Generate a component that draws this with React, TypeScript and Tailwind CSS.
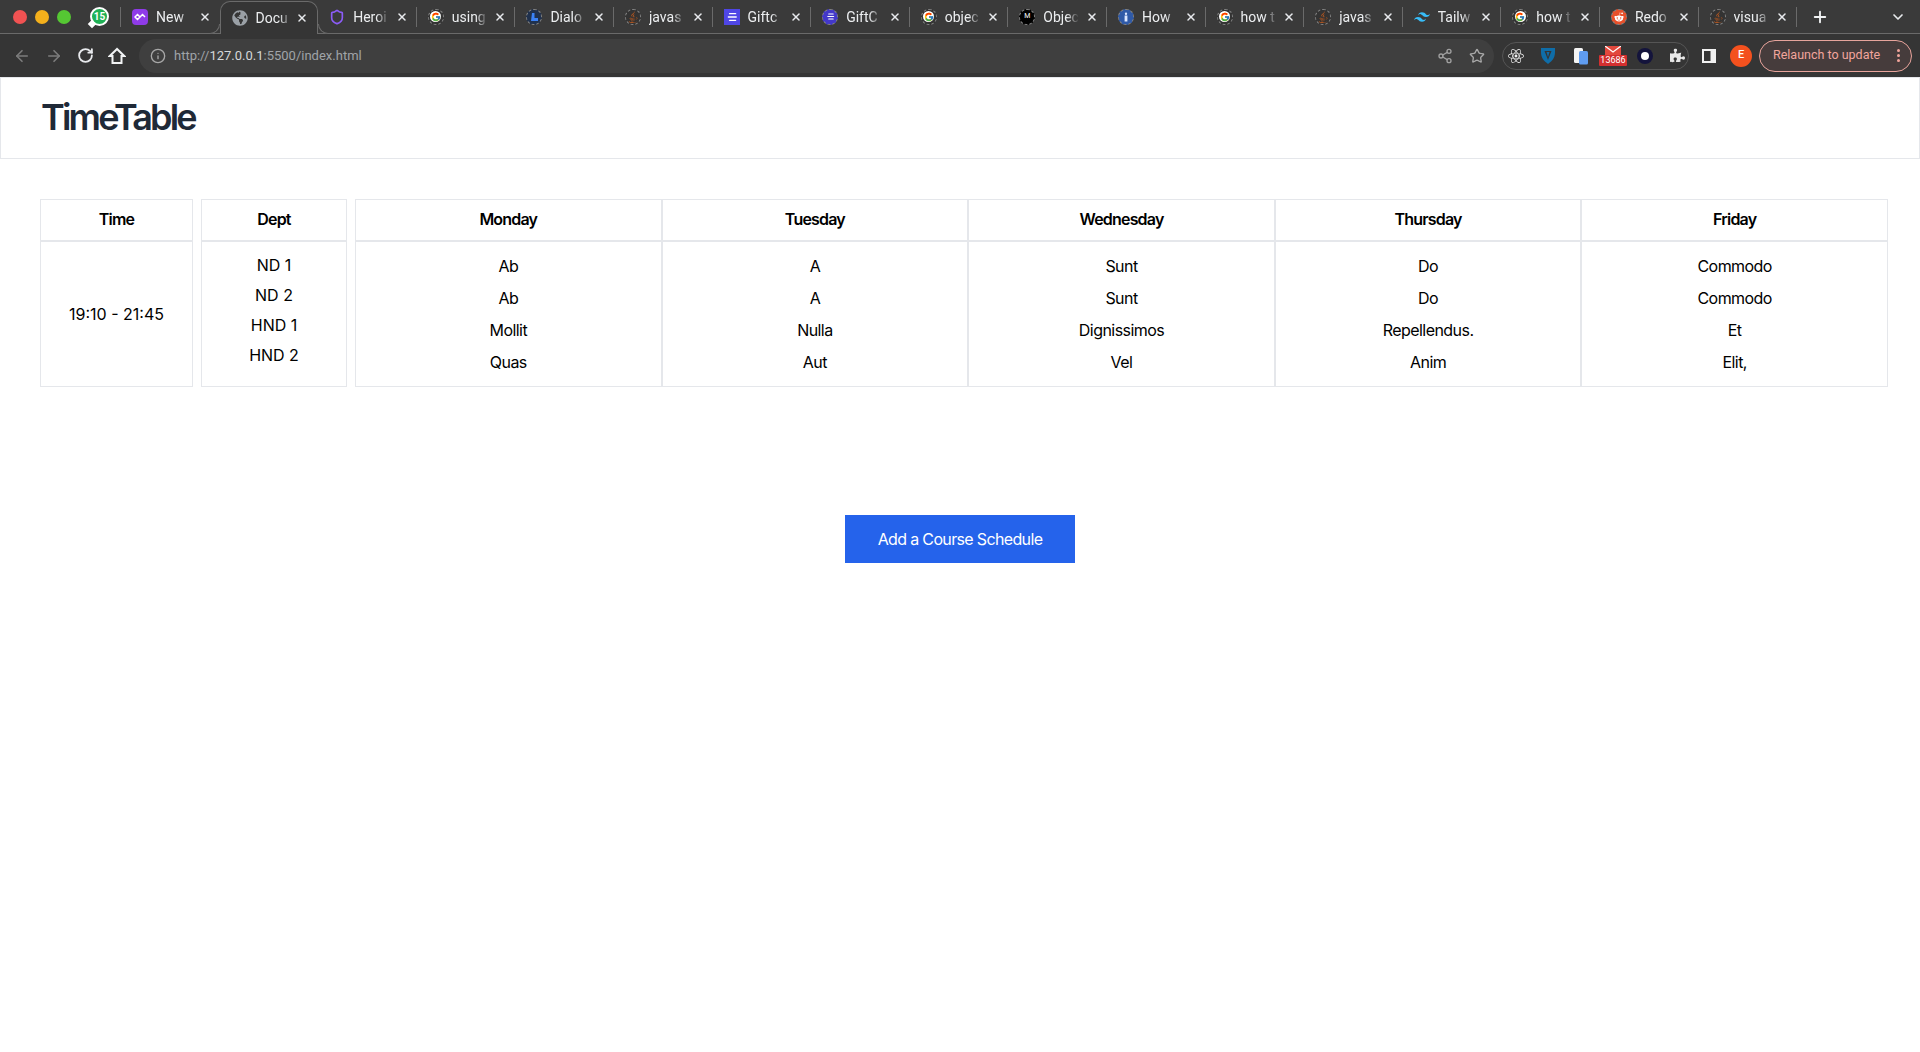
import React from "react";
import { ArrowLeft, ArrowRight, RotateCw, Info, Share2, Star, Plus, ChevronDown, Shield, X } from "lucide-react";
import { FcGoogle } from "react-icons/fc";
import { FaJava, FaReact, FaPuzzlePiece, FaGlobeAmericas, FaRedditAlien } from "react-icons/fa";
import { SiTailwindcss } from "react-icons/si";

function Ring({ children, inner = "bg-[#333333]" }: { children?: React.ReactNode; inner?: string }) {
  return (
    <div className={`flex h-4 w-4 items-center justify-center overflow-hidden rounded-full border-[1.5px] border-dashed border-[#858585] ${inner}`}>
      {children}
    </div>
  );
}

const GoogleIcon = () => (
  <Ring>
    <div className="flex h-[11px] w-[11px] items-center justify-center rounded-full bg-white">
      <FcGoogle size={10} />
    </div>
  </Ring>
);
const JavaIcon = () => (
  <Ring>
    <FaJava size={12} color="#d4601c" />
  </Ring>
);
const Bars = ({ w = 10 }: { w?: number }) => (
  <svg width={w} height={w} viewBox="0 0 10 10">
    <path d="M3 2.2h5M2 5h6.5M3 7.8h5" stroke="#fff" strokeWidth="1.2" strokeLinecap="round" />
  </svg>
);

type Tab = { label: string; icon: React.ReactNode; active?: boolean };

const tabs: Tab[] = [
  {
    label: "New",
    icon: (
      <div className="flex h-4 w-4 items-center justify-center rounded-[4px] bg-[#8f3be8]">
        <svg width="12" height="12" viewBox="0 0 12 12" fill="none" stroke="#fff" strokeWidth="1.5">
          <path d="M1 6l2.5-2.5L6 6 3.5 8.5zM6 6l2.5-2.5L11 6" />
        </svg>
      </div>
    ),
  },
  { label: "Docu", active: true, icon: <FaGlobeAmericas size={16} color="#9aa0a6" /> },
  { label: "Heroi", icon: <Shield size={18} color="#8b5cf6" strokeWidth={2.5} /> },
  { label: "using", icon: <GoogleIcon /> },
  {
    label: "Dialo",
    icon: (
      <Ring inner="bg-[#20314d]">
        <svg width="10" height="10" viewBox="0 0 10 10">
          <path d="M3 1h2.5v5H9v3H2z" fill="#3b82f6" />
        </svg>
      </Ring>
    ),
  },
  { label: "javas", icon: <JavaIcon /> },
  {
    label: "Giftc",
    icon: (
      <div className="flex h-4 w-4 items-center justify-center bg-[#4f46e5]">
        <Bars w={12} />
      </div>
    ),
  },
  {
    label: "GiftC",
    icon: (
      <Ring inner="bg-[#4338ca]">
        <Bars w={9} />
      </Ring>
    ),
  },
  { label: "objec", icon: <GoogleIcon /> },
  {
    label: "Objec",
    icon: (
      <Ring inner="bg-black">
        <span className="text-[7px] leading-none text-white">M</span>
      </Ring>
    ),
  },
  {
    label: "How",
    icon: (
      <Ring inner="bg-[#2f5aa8]">
        <svg width="8" height="10" viewBox="0 0 8 10">
          <path d="M4 0.5a1.2 1.2 0 110 2.4 1.2 1.2 0 010-2.4zM2.6 3.4h2.8v6.2H2.6z" fill="#dbe6ff" />
        </svg>
      </Ring>
    ),
  },
  { label: "how t", icon: <GoogleIcon /> },
  { label: "javas", icon: <JavaIcon /> },
  { label: "Tailw", icon: <SiTailwindcss size={16} color="#38bdf8" /> },
  { label: "how t", icon: <GoogleIcon /> },
  {
    label: "Redo",
    icon: (
      <Ring inner="bg-[#e8502a]">
        <FaRedditAlien size={10} color="#fff" />
      </Ring>
    ),
  },
  { label: "visua", icon: <JavaIcon /> },
];

function TabItem({ tab, hideSep }: { tab: Tab; hideSep: boolean }) {
  const hasSep = !hideSep && !tab.active;
  return (
    <div
      className={`relative flex h-full w-[98.6px] items-center ${
        tab.active ? "z-10 mt-px h-[33px] rounded-t-[10px] border border-b-0 border-[#6a6a6a] bg-[#353535]" : ""
      }`}
    >
      {tab.active && (
        <>
          <span className="absolute -left-[11px] bottom-0 h-[10px] w-[10px] rounded-br-[10px] border-r border-b border-[#6a6a6a] bg-[#3a3a3a]" />
          <span className="absolute -right-[11px] bottom-0 h-[10px] w-[10px] rounded-bl-[10px] border-l border-b border-[#6a6a6a] bg-[#3a3a3a]" />
          <span className="absolute -bottom-px left-0 right-0 h-px bg-[#353535]" />
        </>
      )}
      <div className="ml-[11px] flex h-4 w-4 shrink-0 items-center justify-center">{tab.icon}</div>
      <span className="ml-2 w-9 shrink-0 overflow-hidden whitespace-nowrap pt-px text-[14px] text-[#eceef0] [font-family:Roboto,sans-serif] [mask-image:linear-gradient(to_right,black_65%,transparent)]">
        {tab.label}
      </span>
      <X size={12} strokeWidth={3} color="#e8eaed" className={`ml-auto shrink-0 ${hasSep ? "mr-[8px]" : "mr-[9px]"}`} />
      {hasSep && <span className="h-5 w-px shrink-0 bg-[#6a6a6a]" />}
    </div>
  );
}

function ChromeBar() {
  return (
    <div className="[font-family:Roboto,sans-serif]">
      <div className="flex h-[34px] items-center border-b border-[#6a6a6a] bg-[#3a3a3a]">
        <div className="flex w-[120px] shrink-0 items-center">
          <div className="ml-[13px] flex gap-2">
            <span className="h-[14px] w-[14px] rounded-full bg-[#f05252]" />
            <span className="h-[14px] w-[14px] rounded-full bg-[#f4b01c]" />
            <span className="h-[14px] w-[14px] rounded-full bg-[#55c733]" />
          </div>
          <div className="relative ml-[19px] flex h-[19px] w-[19px] items-center justify-center rounded-full border-2 border-white bg-[#1fb155] text-[10px] font-bold leading-none text-white">
            15
            <span className="absolute -bottom-[3px] -left-[3px] h-[6px] w-[6px] rotate-45 bg-white" />
          </div>
        </div>
        <span className="h-5 w-px shrink-0 bg-[#6a6a6a]" />
        <div className="flex h-full items-center">
          {tabs.map((t, i) => (
            <TabItem key={i} tab={t} hideSep={tabs[i + 1]?.active === true} />
          ))}
        </div>
        <Plus size={18} strokeWidth={2.5} color="#f1f3f4" className="ml-[14px]" />
        <ChevronDown size={16} strokeWidth={2.5} color="#e8eaed" className="ml-auto mr-[14px]" />
      </div>

      <div className="flex h-[43px] items-center bg-[#353535]">
        <div className="ml-[13px] flex items-center gap-[14px]">
          <ArrowLeft size={18} color="#7c7c7c" strokeWidth={2.2} />
          <ArrowRight size={18} color="#7c7c7c" strokeWidth={2.2} />
          <RotateCw size={17} color="#e8eaed" strokeWidth={2.6} />
          <svg width="18" height="18" viewBox="0 0 18 18" fill="none" stroke="#f1f3f4" strokeWidth="2">
            <path d="M9 2L1.8 9H4.5V16H13.5V9H16.2Z" strokeLinejoin="miter" />
          </svg>
        </div>
        <div className="ml-[13px] flex h-[34px] w-[1355px] items-center rounded-full bg-[#3f3f3f] pl-[11px] pr-[9px]">
          <Info size={16} color="#a8a8a8" strokeWidth={2} />
          <span className="ml-2 text-[13px] text-[#a0a4a8]">
            http://<span className="text-[#d6d8da]">127.0.0.1</span>:5500/index.html
          </span>
          <div className="ml-auto flex items-center gap-4">
            <Share2 size={16} color="#a0a0a0" strokeWidth={2} />
            <Star size={16} color="#a8a8a8" strokeWidth={2} />
          </div>
        </div>
        <div className="ml-2 flex h-7 w-[187px] items-center rounded-full border border-[#555] pl-[5px]">
          <FaReact size={16} color="#f1f1f1" />
          <svg className="ml-[16px]" width="16" height="18" viewBox="0 0 16 18">
            <path d="M1 1h14v4c0 6-3 9-7 12C4 14 1 11 1 5z" fill="#0f6da8" />
            <path d="M4.5 4h7L8 13z" fill="#353535" />
            <path d="M6.5 5h3L8 10z" fill="#0f6da8" />
          </svg>
          <svg className="ml-[17px]" width="16" height="18" viewBox="0 0 16 18">
            <rect x="1" y="1" width="9" height="15" rx="1.5" fill="#f4f4f4" />
            <rect x="6" y="4" width="9" height="13.5" rx="1.5" fill="#5f9cf0" />
          </svg>
          <div className="relative ml-4 h-4 w-4">
            <svg className="mt-[-2px]" width="16" height="10" viewBox="0 0 16 10">
              <rect width="16" height="10" fill="#e2483d" />
              <path d="M0 0l8 6 8-6" fill="none" stroke="#fff" strokeWidth="1.2" />
            </svg>
            <span className="absolute left-[-6px] top-[7px] h-[11px] w-7 rounded-[1px] bg-[#d32f2f] text-center text-[9px] leading-[11px] text-white">
              13686
            </span>
          </div>
          <div className="ml-4 flex h-4 w-4 items-center justify-center rounded-full bg-[#14143c]">
            <span className="h-2 w-2 rounded-full bg-white" />
          </div>
          <FaPuzzlePiece size={15} color="#e8e8e8" className="ml-[17px]" />
        </div>
        <svg className="ml-[13px]" width="14" height="14" viewBox="0 0 14 14">
          <rect width="14" height="14" fill="#f1f1f1" />
          <rect x="2" y="2" width="6.5" height="10" fill="#353535" />
        </svg>
        <div className="ml-[14px] flex h-[22px] w-[22px] items-center justify-center rounded-full bg-[#f4511e] text-[11px] font-medium text-white">
          E
        </div>
        <div className="ml-[7px] flex h-8 w-[153px] items-center rounded-full border border-[#e8a49c] bg-[#463c3c] pl-[13px]">
          <span className="whitespace-nowrap text-[12.5px] text-[#f2a59c]">Relaunch to update</span>
          <div className="ml-auto mr-[11px] flex flex-col gap-[2px]">
            <span className="h-[3px] w-[3px] rounded-full bg-[#f2a59c]" />
            <span className="h-[3px] w-[3px] rounded-full bg-[#f2a59c]" />
            <span className="h-[3px] w-[3px] rounded-full bg-[#f2a59c]" />
          </div>
        </div>
      </div>
    </div>
  );
}

const depts = ["ND 1", "ND 2", "HND 1", "HND 2"];
const days = [
  { name: "Monday", rows: ["Ab", "Ab", "Mollit", "Quas"] },
  { name: "Tuesday", rows: ["A", "A", "Nulla", "Aut"] },
  { name: "Wednesday", rows: ["Sunt", "Sunt", "Dignissimos", "Vel"] },
  { name: "Thursday", rows: ["Do", "Do", "Repellendus.", "Anim"] },
  { name: "Friday", rows: ["Commodo", "Commodo", "Et", "Elit,"] },
];

const thClass = "h-[42px] border border-[#e5e7eb] p-0 pb-[2px] text-center text-base font-semibold tracking-[-0.8px] text-black";
const tdClass = "h-[146px] border border-[#e5e7eb] p-0 pb-px text-center text-base text-black";

export default function App() {
  return (
    <div className="h-screen overflow-hidden bg-white [font-family:Inter,sans-serif]">
      <ChromeBar />
      <header className="flex h-[82px] items-center border border-[#e5e7eb] pb-[2px] pl-10">
        <h1 className="text-4xl font-semibold tracking-[-2.8px] text-[#1f2937]">TimeTable</h1>
      </header>

      <main className="pl-10 pr-8 pt-10">
        <div className="flex gap-2">
          <table className="w-[153px] shrink-0 table-fixed border-separate border-spacing-0">
            <thead>
              <tr>
                <th className={thClass}>Time</th>
              </tr>
            </thead>
            <tbody>
              <tr>
                <td className={tdClass}>19:10 - 21:45</td>
              </tr>
            </tbody>
          </table>
          <table className="w-[146px] shrink-0 table-fixed border-separate border-spacing-0">
            <thead>
              <tr>
                <th className={thClass}>Dept</th>
              </tr>
            </thead>
            <tbody>
              <tr>
                <td className={`${tdClass} align-top`}>
                  <div className="pt-2">
                    {depts.map((d) => (
                      <div key={d} className="leading-[30px]">
                        {d}
                      </div>
                    ))}
                  </div>
                </td>
              </tr>
            </tbody>
          </table>
          <table className="w-[1533px] shrink-0 table-fixed border-separate border-spacing-0">
            <thead>
              <tr>
                {days.map((d) => (
                  <th key={d.name} className={thClass}>
                    {d.name}
                  </th>
                ))}
              </tr>
            </thead>
            <tbody>
              <tr>
                {days.map((d) => (
                  <td key={d.name} className={tdClass}>
                    {d.rows.map((r, i) => (
                      <div key={i} className="leading-8 tracking-[-0.55px]">
                        {r}
                      </div>
                    ))}
                  </td>
                ))}
              </tr>
            </tbody>
          </table>
        </div>

        <div className="mt-32 flex justify-center">
          <button className="-ml-[8px] h-12 w-[230px] bg-[#2563eb] pb-px text-base font-normal tracking-[-0.65px] text-white">
            Add a Course Schedule
          </button>
        </div>
      </main>
    </div>
  );
}
